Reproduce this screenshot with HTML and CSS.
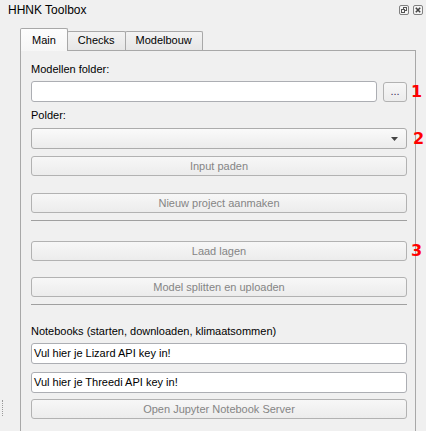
FILE: index.html
```html
<!DOCTYPE html>
<html>
<head>
<meta charset="utf-8">
<title>HHNK Toolbox</title>
<link rel="stylesheet" href="styles.css">
</head>
<body>
<div class="dock">
  <div class="titlebar">
    <span class="title">HHNK Toolbox</span>
    <div class="title-btns">
      <svg class="tb-icon" width="10" height="10" viewBox="0 0 10 10">
        <rect x="0.5" y="0.5" width="9" height="9" rx="1.5" fill="#f4f4f4" stroke="#808080"/>
        <rect x="4.5" y="2.5" width="3" height="3" fill="none" stroke="#555"/>
        <rect x="2.5" y="4.5" width="3" height="3" fill="#f4f4f4" stroke="#555"/>
      </svg>
      <svg class="tb-icon" width="10" height="10" viewBox="0 0 10 10">
        <rect x="0.5" y="0.5" width="9" height="9" rx="1.5" fill="#f4f4f4" stroke="#808080"/>
        <path d="M2.8 2.8 L7.2 7.2 M7.2 2.8 L2.8 7.2" stroke="#444" stroke-width="1.6"/>
      </svg>
    </div>
  </div>
  <div class="dock-body">
    <div class="grip-col"><div class="grip"></div></div>
    <div class="tabwidget">
      <div class="tabbar">
        <div class="tab active">Main</div>
        <div class="tab">Checks</div>
        <div class="tab">Modelbouw</div>
      </div>
      <div class="pane">
        <div class="label">Modellen folder:</div>
        <div class="row folder-row">
          <div class="input"></div>
          <div class="btn small">...</div>
          <span class="mark">1</span>
        </div>
        <div class="label polder-label">Polder:</div>
        <div class="row combo-row">
          <div class="combo">
            <svg width="7" height="4" viewBox="0 0 7 4"><path d="M0 0 H7 L3.5 4 Z" fill="#444"/></svg>
          </div>
          <span class="mark mark2">2</span>
        </div>
        <div class="btn b-input">Input paden</div>
        <div class="btn b-nieuw">Nieuw project aanmaken</div>
        <div class="sep s1"></div>
        <div class="row laad-row">
          <div class="btn grow">Laad lagen</div>
          <span class="mark">3</span>
        </div>
        <div class="btn b-split">Model splitten en uploaden</div>
        <div class="sep s2"></div>
        <div class="label nb-label">Notebooks (starten, downloaden, klimaatsommen)</div>
        <div class="input text-input i-lizard">Vul hier je Lizard API key in!</div>
        <div class="input text-input i-threedi">Vul hier je Threedi API key in!</div>
        <div class="btn b-jupyter">Open Jupyter Notebook Server</div>
      </div>
    </div>
  </div>
</div>
</body>
</html>
```
FILE: styles.css
```css
* { box-sizing: border-box; }

html, body {
  margin: 0;
  width: 426px;
  height: 431px;
  overflow: hidden;
  background: #f0f0f0;
  font-family: "Liberation Sans", Arial, sans-serif;
  font-size: 11px;
  color: #000;
}

.titlebar {
  height: 22px;
  display: flex;
  justify-content: space-between;
  align-items: flex-start;
  padding: 0 3px 0 8px;
}

.title {
  font-size: 12px;
  line-height: 14px;
  margin-top: 3px;
}

.title-btns {
  display: flex;
  gap: 4px;
  margin-top: 5px;
}

.tb-icon { display: block; }

.dock-body {
  display: flex;
  padding-top: 6px;
}

.grip-col {
  width: 20px;
  flex: none;
}

.grip {
  margin-top: 372px;
  margin-left: 2px;
  width: 1px;
  height: 16px;
  border-left: 1px dotted #9a9a9a;
}

.tabwidget {
  width: 396px;
  flex: none;
}

.tabbar {
  display: flex;
  align-items: flex-end;
  height: 22px;
}

.tab {
  height: 19px;
  border: 1px solid #a8a8a8;
  border-bottom: none;
  border-radius: 2px 2px 0 0;
  margin-left: -1px;
  padding: 1px 10px 0;
  line-height: 14px;
  background: linear-gradient(#f3f3f3, #e6e6e6);
}

.tab:first-child { margin-left: 0; }

.tab.active {
  position: relative;
  z-index: 1;
  height: 23px;
  margin-bottom: -1px;
  padding: 4px 11px 0;
  background: linear-gradient(#fdfdfd, #f6f6f6);
}

.pane {
  border: 1px solid #a8a8a8;
  border-bottom: none;
  height: 381px;
  padding: 11px 8px 0 10px;
  display: flex;
  flex-direction: column;
}

.label {
  height: 14px;
  line-height: 14px;
  white-space: nowrap;
}

.row {
  position: relative;
  display: flex;
  align-items: center;
  gap: 6px;
}

.folder-row { margin-top: 5px; }
.polder-label { margin-top: 6px; }
.combo-row { margin-top: 6px; }

.input {
  height: 21px;
  background: #fff;
  border: 1px solid #acaeb3;
  border-radius: 3px;
}

.row .input { flex: 1; }

.text-input {
  line-height: 19px;
  padding: 0 2px;
  white-space: nowrap;
}

.i-lizard { margin-top: 5px; }
.i-threedi { margin-top: 8px; }

.btn {
  height: 20px;
  border: 1px solid #b2b2b2;
  border-radius: 3px;
  background: linear-gradient(#f7f7f7, #ececec);
  color: #858585;
  text-align: center;
  line-height: 18px;
  white-space: nowrap;
}

.btn.small {
  width: 24px;
  flex: none;
  color: #3a2f55;
  line-height: 16px;
}

.btn.grow { flex: 1; }

.b-input { margin-top: 7px; }
.b-nieuw { margin-top: 17px; }
.laad-row { margin-top: 20px; }
.b-split { margin-top: 16px; }
.b-jupyter { margin-top: 6px; }

.combo {
  flex: 1;
  height: 21px;
  border: 1px solid #acacac;
  border-radius: 3px;
  background: linear-gradient(#fafafa, #ececec);
  display: flex;
  justify-content: flex-end;
  align-items: center;
  padding-right: 8px;
}

.combo svg { display: block; }

.sep {
  height: 1px;
  background: #a0a0a0;
}

.s1 { margin-top: 7px; }
.s2 { margin-top: 7px; }
.nb-label { margin-top: 19px; }

.mark {
  position: absolute;
  left: calc(100% + 4px);
  top: 50%;
  transform: translateY(-50%);
  font-family: "DejaVu Sans", sans-serif;
  font-weight: bold;
  font-size: 16px;
  line-height: 16px;
  color: #ff0000;
}

.mark2 { left: calc(100% + 6px); }
```
